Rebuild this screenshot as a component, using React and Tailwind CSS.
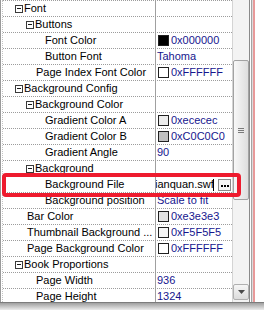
import React from "react";

const rows = [
  { type: "cat", label: "Font", pl: 12 },
  { type: "cat", label: "Buttons", pl: 23 },
  { type: "leaf", label: "Font Color", pl: 42, swatch: "bg-[#000000]", value: "0x000000" },
  { type: "leaf", label: "Button Font", pl: 42, value: "Tahoma" },
  { type: "leaf", label: "Page Index Font Color", pl: 33, swatch: "bg-[#ffffff]", value: "0xFFFFFF" },
  { type: "cat", label: "Background Config", pl: 12 },
  { type: "cat", label: "Background Color", pl: 23 },
  { type: "leaf", label: "Gradient Color A", pl: 42, swatch: "bg-[#ececec]", value: "0xececec" },
  { type: "leaf", label: "Gradient Color B", pl: 42, swatch: "bg-[#c0c0c0]", value: "0xC0C0C0" },
  { type: "leaf", label: "Gradient Angle", pl: 42, value: "90" },
  { type: "cat", label: "Background", pl: 23 },
  { type: "edit", label: "Background File", pl: 42, value: "ianquan.swf" },
  { type: "leaf", label: "Background position", pl: 42, value: "Scale to fit" },
  { type: "leaf", label: "Bar Color", pl: 24, swatch: "bg-[#e3e3e3]", value: "0xe3e3e3" },
  { type: "leaf", label: "Thumbnail Background ...", pl: 24, swatch: "bg-[#f5f5f5]", value: "0xF5F5F5" },
  { type: "leaf", label: "Page Background Color", pl: 24, swatch: "bg-[#ffffff]", value: "0xFFFFFF" },
  { type: "cat", label: "Book Proportions", pl: 12 },
  { type: "leaf", label: "Page Width", pl: 33, value: "936" },
  { type: "leaf", label: "Page Height", pl: 33, value: "1324" },
];

function MinusBox() {
  return (
    <span className="w-[8px] h-[8px] border border-[#3a3a3a] bg-white flex items-center justify-center mr-[1px] shrink-0">
      <span className="w-[4px] h-[1px] bg-[#1a1a1a]" />
    </span>
  );
}

function Row({ row }) {
  const isEdit = row.type === "edit";
  return (
    <div className="flex h-[16px] border-b border-dotted border-[#9c9c9c]">
      <div
        className={`w-[153px] shrink-0 flex items-center border-r border-solid border-[#a0a0a0] overflow-hidden whitespace-nowrap ${
          isEdit ? "border-t border-l border-t-[#8c8c8c] border-l-[#8c8c8c] -mt-[1px] h-[16px]" : ""
        }`}
        style={{ paddingLeft: isEdit ? row.pl - 1 : row.pl }}
      >
        {row.type === "cat" && <MinusBox />}
        <span className="text-black">{row.label}</span>
      </div>
      <div className="flex-1 flex items-center overflow-hidden whitespace-nowrap">
        {row.swatch && (
          <span className={`w-[11px] h-[11px] border border-[#202020] ml-[2px] mr-[2px] shrink-0 ${row.swatch}`} />
        )}
        {row.type === "leaf" && (
          <span className={`text-[#16168e] ${row.swatch ? "" : "pl-[1px]"}`}>{row.value}</span>
        )}
        {isEdit && (
          <div className="flex items-center w-full h-full bg-white">
            <div className="w-[57px] overflow-hidden flex items-center">
              <span className="text-black -ml-[1px]">{row.value}</span>
            </div>
            <span className="w-[1px] h-[12px] bg-black ml-[0px]" />
            <div className="ml-[4px] w-[13px] h-[12px] border border-[#8a8a8a] bg-[#f4f4f4] flex items-end justify-center pb-[3px] gap-[1px]">
              <span className="w-[2px] h-[2px] bg-black" />
              <span className="w-[2px] h-[2px] bg-black" />
              <span className="w-[2px] h-[2px] bg-black" />
            </div>
          </div>
        )}
      </div>
    </div>
  );
}

function Scrollbar() {
  return (
    <div className="w-[17px] h-full bg-[#f3f3f3] border-l border-[#d4d4d4] flex flex-col">
      <div className="h-[60px] shrink-0" />
      <div className="h-[140px] shrink-0 mx-[0px] w-[16px] rounded-[2px] border border-[#a2a2a2] bg-linear-to-r from-[#f8f8f8] to-[#dedede] flex flex-col items-center justify-center gap-[1px]">
        <span className="w-[6px] h-[1px] bg-[#7a7a7a]" />
        <span className="w-[6px] h-[1px] bg-[#7a7a7a]" />
        <span className="w-[6px] h-[1px] bg-[#7a7a7a]" />
      </div>
      <div className="flex-1" />
      <div className="h-[16px] w-[16px] mb-[2px] rounded-[2px] border border-[#b0b0b0] bg-linear-to-b from-[#f6f6f6] to-[#dcdcdc] flex items-center justify-center">
        <svg width="7" height="4" viewBox="0 0 7 4">
          <path d="M0 0h7L3.5 4z" fill="#4a4a4a" />
        </svg>
      </div>
    </div>
  );
}

export default function App() {
  return (
    <div
      className="w-[264px] h-[310px] bg-white overflow-hidden relative text-[11px] leading-[15px]"
      style={{ fontFamily: '"Liberation Sans", Arial, sans-serif' }}
    >
      <div className="flex h-[303px] border-b border-[#7c7c7c]">
        <div className="flex h-full border-l border-[#9a9a9a] pl-[1px]">
          <div className="w-[230px] h-full border-l border-[#c4c4c4] border-t border-t-[#9c9c9c] border-dotted overflow-hidden">
            {rows.map((row) => (
              <Row key={row.label} row={row} />
            ))}
          </div>
        </div>
        <Scrollbar />
        <div className="flex h-full">
          <span className="w-[1px] h-full bg-[#8a8a8a]" />
          <span className="w-[1px] h-full bg-white" />
          <span className="w-[1px] h-full bg-[#a4a4a4]" />
          <span className="w-[1px] h-full bg-[#dcdcdc]" />
          <span className="w-[2px] h-full bg-[#e89a9a]" />
          <span className="w-[8px] h-full bg-white" />
        </div>
      </div>
      <div className="h-[7px] bg-linear-to-b from-[#a0a0a0] to-[#ececec]" />

      {/* red highlight over the edited row */}
      <div className="absolute left-[2px] top-[173px] w-[239px] h-[24px] border-[4px] border-[#ee1b2e] rounded-[4px]" />
    </div>
  );
}
